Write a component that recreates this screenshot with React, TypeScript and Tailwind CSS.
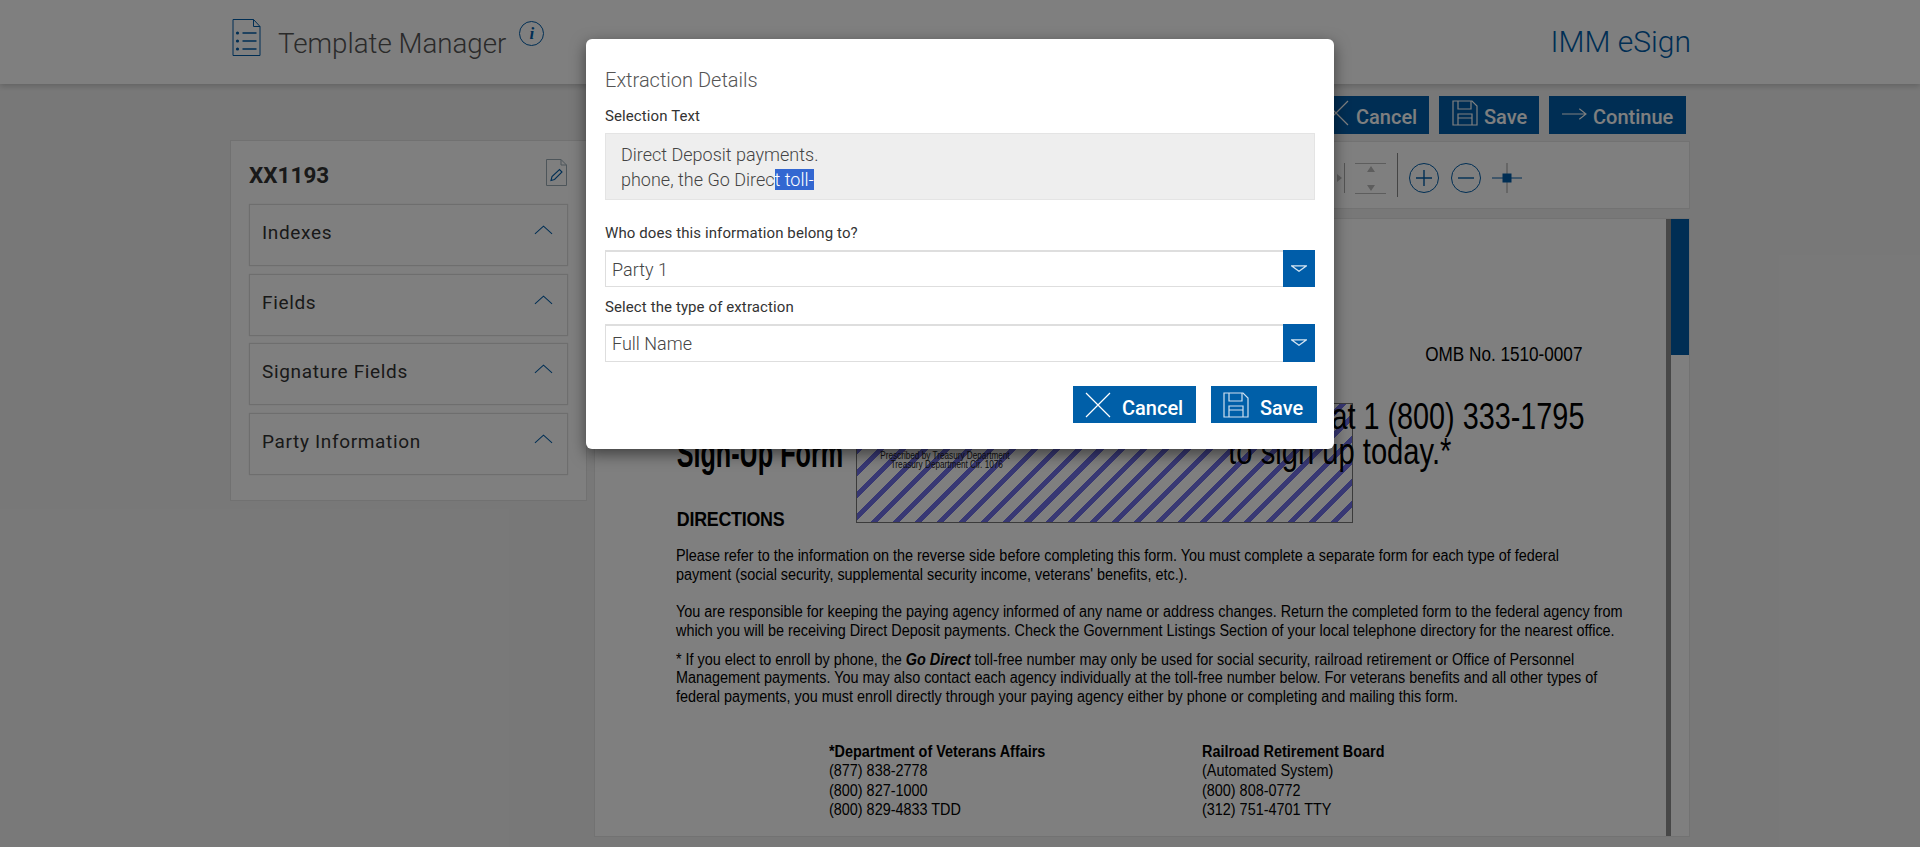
import React from "react";

const IconX = ({ className }: { className?: string }) => (
  <svg viewBox="0 0 26 26" className={className} fill="none" stroke="currentColor" strokeWidth="1.2"><path d="M1 1 25 25M25 1 1 25" /></svg>
);
const IconSave = ({ className }: { className?: string }) => (
  <svg viewBox="0 0 26 26" className={className} fill="none" stroke="currentColor" strokeWidth="1.2"><path d="M1 1H20L25 6V25H1Z" /><path d="M6 1V9H19V1" /><path d="M6 25V14H20V25M6 18H20" /></svg>
);

const ActionButton = ({ icon, label, className }: { icon: React.ReactNode; label: string; className: string }) => (
  <button className={`flex h-[38px] items-start bg-[#005da9] pt-[4px] font-medium text-white text-[20px] ${className}`}>
    {icon}
    <span className="mt-[3px] leading-[28px]">{label}</span>
  </button>
);

const Accordion = ({ label }: { label: string }) => (
  <div className="flex h-[62px] justify-between border border-[#dcdcdc] pl-[12px] pr-[14px] pt-[15px] shadow-[0_0_1px_#ddd]">
    <span className="text-[19px] leading-[26px] tracking-[0.65px] text-[#333]">{label}</span>
    <svg viewBox="0 0 20 10" className="mt-[5px] h-[10px] w-[19px] text-[#005da9]" fill="none" stroke="currentColor" strokeWidth="1.1"><path d="M1 9 10 1l9 8" /></svg>
  </div>
);

const Select = ({ value, className }: { value: string; className: string }) => (
  <div className={`flex ${className} border border-[#dedede] border-t-2 bg-white`}>
    <div className="flex-1 pl-[6px] text-[18px] font-light leading-[35px] text-[#444]">{value}</div>
    <div className="-my-[1px] -mt-[2px] -mr-[1px] flex w-[32px] items-center justify-center bg-[#005da9]">
      <svg viewBox="0 0 16 7" className="mb-[1px] h-[7px] w-[16px]" fill="none" stroke="#d5e5f2" strokeWidth="1.2"><path d="M.5.8H15.5L8 6.3Z" /></svg>
    </div>
  </div>
);

const docLine = "block whitespace-nowrap origin-left scale-x-[0.9]";

export default function App() {
  return (
    <div className="relative h-[847px] w-[1920px] overflow-hidden bg-[#f1f1f1] font-['Roboto',sans-serif]">
      <header className="flex h-[84px] items-start justify-between bg-white pl-[232px] pr-[229px] shadow-[0_2px_6px_rgba(0,0,0,0.2)]">
        <div className="flex items-start">
          <svg viewBox="0 0 28 37" className="mt-[19px] h-[37px] w-[29px] text-[#005da9]" fill="none" stroke="currentColor" strokeWidth="1"><path d="M.5.5H21L27.5 7.5V36.5H.5Z" /><path d="M21 .5V7.5H27.5" /><circle cx="5" cy="14" r="1.6" fill="currentColor" stroke="none" /><circle cx="5" cy="22" r="1.6" fill="currentColor" stroke="none" /><circle cx="5" cy="30" r="1.6" fill="currentColor" stroke="none" /><path d="M10 14H24M10 22H24M10 30H24" strokeWidth="1.4" /></svg>
          <div className="ml-[17px] mt-[25px] text-[27.7px] font-light leading-[38px] text-[#555]">Template Manager</div>
          <div className="ml-[13px] mt-[21px] flex h-[25px] w-[25px] items-center justify-center rounded-full border border-[#005da9] font-['Liberation_Serif',serif] text-[17px] font-bold italic leading-none text-[#005da9]">i</div>
        </div>
        <div className="mt-[23px] text-[30px] font-light leading-[38px] text-[#005da9]">IMM eSign</div>
      </header>

      <main className="flex pl-[230px] pr-[230px]">
        <aside className="mt-[56px] h-[361px] w-[357px] shrink-0 border border-[#e2e2e2] bg-white px-[18px] pt-[18px]">
          <div className="flex items-start justify-between pr-[1px]">
            <div className="text-[22.5px] font-bold leading-[32px] text-[#333]">XX1193</div>
            <svg viewBox="0 0 21 27" className="h-[27px] w-[21px] text-[#9aabb5]" fill="none" stroke="currentColor" strokeWidth="1"><path d="M.5.5H15L20.5 6V26.5H.5Z" /><path d="M15 .5V6H20.5" /><path d="M5 21.5 6 17.5 13.5 10.5 16 13 8.500 20.500Z" stroke="#005da9" strokeWidth="1.1" /></svg>
          </div>
          <div className="mt-[13px] flex flex-col gap-[7.5px]">
            <Accordion label="Indexes" />
            <Accordion label="Fields" />
            <Accordion label="Signature Fields" />
            <Accordion label="Party Information" />
          </div>
        </aside>

        <section className="ml-[7px] flex h-[753px] min-w-0 flex-1 flex-col">
          <div className="mt-[12px] flex h-[38px] justify-end gap-[10px] pr-[4px]">
            <ActionButton className="w-[130px] gap-[7px] pl-[24px]" icon={<IconX className="h-[26px] w-[26px]" />} label="Cancel" />
            <ActionButton className="w-[100px] gap-[6px] pl-[13px]" icon={<IconSave className="h-[26px] w-[26px]" />} label="Save" />
            <ActionButton className="w-[137px] gap-[6px] pl-[13px]" icon={<svg viewBox="0 0 26 12" className="mt-[8px] h-[12px] w-[25px]" fill="none" stroke="currentColor" strokeWidth="1.1"><path d="M0 6H25M18 .5 25 6l-7 5.5" /></svg>} label="Continue" />
          </div>
          <div className="mt-[7px] flex h-[68px] justify-end border border-[#e4e4e4] bg-white pr-[167px]">
            <div className="mt-[21px] flex h-[30px] items-center gap-[2px]">
              <div className="h-0 w-0 border-y-[4px] border-l-[5px] border-y-transparent border-l-[#bbb]" />
              <div className="h-[30px] w-px bg-[#aaa]" />
            </div>
            <div className="ml-[10px] mt-[21px] flex h-[31px] w-[31px] flex-col items-center justify-between border-y border-[#bbb] py-[2px]">
              <div className="h-0 w-0 border-x-[4px] border-b-[6px] border-x-transparent border-b-[#bbb]" />
              <div className="h-0 w-0 border-x-[4px] border-t-[6px] border-x-transparent border-t-[#bbb]" />
            </div>
            <div className="ml-[11px] mt-[11px] h-[44px] w-px bg-[#888]" />
            <svg viewBox="0 0 30 30" className="ml-[11px] mt-[21px] h-[30px] w-[30px] text-[#005da9]" fill="none" stroke="currentColor"><circle cx="15" cy="15" r="14.5" /><path d="M15 7V23M7 15H23" strokeWidth="1.4" /></svg>
            <svg viewBox="0 0 30 30" className="ml-[12px] mt-[21px] h-[30px] w-[30px] text-[#005da9]" fill="none" stroke="currentColor"><circle cx="15" cy="15" r="14.5" /><path d="M7 15H23" strokeWidth="1.4" /></svg>
            <svg viewBox="0 0 30 30" className="ml-[11px] mt-[21px] h-[30px] w-[30px] text-[#005da9]"><path d="M15 0V30" stroke="#999" /><path d="M0 15H30" stroke="currentColor" /><rect x="10.5" y="10.5" width="9" height="9" fill="currentColor" /></svg>
          </div>
          <div className="mt-[9px] flex flex-1 overflow-hidden border border-[#e4e4e4] bg-white">
            <div className="min-w-0 flex-1 pl-[81px] font-['Liberation_Sans',sans-serif] text-black">
              <div className="mt-[124px] pr-[84px] text-right text-[20px] leading-[22px]"><span className="inline-block origin-right scale-x-[0.857]">OMB No. 1510-0007</span></div>
              <div className="relative mt-[28px] flex h-[130px] items-end">
                <div className="mb-[46px] w-[180px] shrink-0 origin-left scale-x-[0.63] whitespace-nowrap pl-[1px] text-[40px] font-bold leading-[48px]">Sign-Up Form</div>
                <div className="h-[120px] w-[497px] shrink-0 border border-[#777] bg-[repeating-linear-gradient(135deg,#7070e8_0,#7070e8_5px,#ffffff_5px,#ffffff_15.5px)] pt-[47px] text-[10px] leading-[9px] text-[#222]">
                  <div className="ml-[9px] w-[130px] whitespace-nowrap text-center"><span className="inline-block scale-x-[0.82]">Prescribed by Treasury Department</span></div>
                  <div className="ml-[9px] w-[130px] whitespace-nowrap text-right"><span className="inline-block origin-right scale-x-[0.82]">Treasury Department Cir. 1076</span></div>
                </div>
                <div className="absolute right-[82px] top-[6px] whitespace-nowrap text-right text-[36px] leading-[35px]">
                  <span className="block origin-right scale-x-[0.8]">Enroll by phone at 1 (800) 333-1795</span>
                  <span className="mr-[133px] block origin-right scale-x-[0.81]">to sign up today.*</span>
                </div>
              </div>
              <div className="-mt-[16px] origin-left scale-x-[0.85] pl-[1px] text-[21px] font-bold leading-[24px] tracking-[-0.3px]">DIRECTIONS</div>
              <div className="mt-[14.5px] text-[16px] leading-[19px]">
                <span className={docLine}>Please refer to the information on the reverse side before completing this form. You must complete a separate form for each type of federal</span>
                <span className={docLine}>payment (social security, supplemental security income, veterans' benefits, etc.).</span>
              </div>
              <div className="mt-[18px] text-[16px] leading-[19.5px]">
                <span className={docLine}>You are responsible for keeping the paying agency informed of any name or address changes. Return the completed form to the federal agency from</span>
                <span className={docLine}>which you will be receiving Direct Deposit payments. Check the Government Listings Section of your local telephone directory for the nearest office.</span>
              </div>
              <div className="mt-[10px] text-[16px] leading-[18.5px]">
                <span className={docLine}>* If you elect to enroll by phone, the <b><i>Go Direct</i></b> toll-free number may only be used for social security, railroad retirement or Office of Personnel</span>
                <span className={docLine}>Management payments. You may also contact each agency individually at the toll-free number below. For veterans benefits and all other types of</span>
                <span className={docLine}>federal payments, you must enroll directly through your paying agency either by phone or completing and mailing this form.</span>
              </div>
              <div className="ml-[153px] mt-[36px] flex text-[16px] leading-[19.3px]">
                <div className="w-[373px]">
                  <b className={docLine}>*Department of Veterans Affairs</b>
                  <span className={docLine}>(877) 838-2778</span>
                  <span className={docLine}>(800) 827-1000</span>
                  <span className={docLine}>(800) 829-4833 TDD</span>
                </div>
                <div>
                  <b className={docLine}>Railroad Retirement Board</b>
                  <span className={docLine}>(Automated System)</span>
                  <span className={docLine}>(800) 808-0772</span>
                  <span className={docLine}>(312) 751-4701 TTY</span>
                </div>
              </div>
            </div>
            <div className="w-[5px] bg-[#8f8f8f]" />
            <div className="w-[18px] bg-white"><div className="h-[136px] bg-[#005da9]" /></div>
          </div>
        </section>
      </main>

      <div className="absolute inset-0 bg-black/50" />

      <div className="absolute left-[586px] top-[39px] h-[410px] w-[748px] rounded-[6px] bg-white px-[19px] shadow-[0_5px_15px_rgba(0,0,0,0.5)]">
        <div className="mt-[27px] text-[20px] font-light leading-[28px] text-[#555]">Extraction Details</div>
        <div className="mt-[12px] text-[15px] leading-[20px] tracking-[0.1px] text-[#333]">Selection Text</div>
        <div className="mt-[7px] h-[67px] w-[710px] border border-[#e4e4e4] bg-[#eeeeee] pl-[15px] pt-[8px] text-[18px] font-light leading-[25px] text-[#444]">
          <div>Direct Deposit payments.</div>
          <div>phone, the Go Direc<span className="bg-[#3367d1] text-white">t toll-</span></div>
        </div>
        <div className="mt-[23px] text-[15px] leading-[20px] tracking-[0.1px] text-[#333]">Who does this information belong to?</div>
        <Select value="Party 1" className="mt-[7px] h-[37px] w-[710px]" />
        <div className="mt-[10px] text-[15px] leading-[20px] tracking-[0.1px] text-[#333]">Select the type of extraction</div>
        <Select value="Full Name" className="mt-[7px] h-[38px] w-[710px]" />
        <div className="mt-[24px] flex w-[712px] justify-end gap-[15px]">
          <button className="flex h-[37px] w-[123px] items-center gap-[11px] bg-[#005fa8] pl-[12px] text-[20px] font-medium text-white"><IconX className="h-[26px] w-[26px]" /><span className="mt-[6px]">Cancel</span></button>
          <button className="flex h-[37px] w-[106px] items-center gap-[11px] bg-[#005fa8] pl-[12px] text-[20px] font-medium text-white"><IconSave className="h-[26px] w-[26px] text-[#cfe0ef]" /><span className="mt-[6px]">Save</span></button>
        </div>
      </div>
    </div>
  );
}
